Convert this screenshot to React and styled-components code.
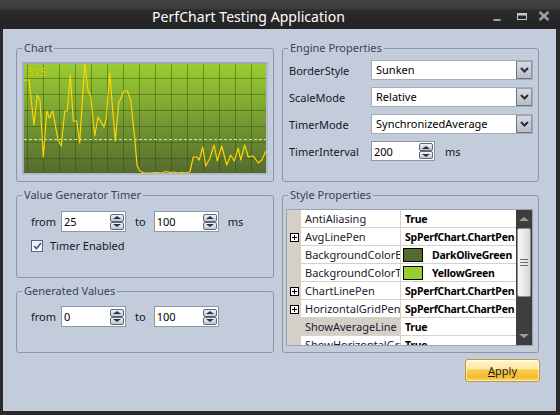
// PerfChart testing window
import React from 'react';
import styled, { createGlobalStyle } from 'styled-components';

const GlobalStyle = createGlobalStyle`
  html, body {
    margin: 0;
    padding: 0;
    background: #262626;
  }
  body {
    font-family: "Noto Sans", "Open Sans", sans-serif;
  }
`;

const Window = styled.div`
  width: 560px;
  height: 415px;
  display: flex;
  flex-direction: column;
  background: #2a2a2a;
  box-sizing: border-box;
`;

const TitleBar = styled.div`
  height: 29px;
  flex: 0 0 29px;
  display: flex;
  align-items: center;
  padding-top: 3px;
  box-sizing: border-box;
  background: linear-gradient(#444 0px, #3a3a3a 9px, #2b2b2b 10px, #232323 29px);
`;

const Title = styled.div`
  flex: 1;
  padding-left: 152px;
  color: #fff;
  font-size: 14px;
  letter-spacing: 0.05px;
`;

const Controls = styled.div`
  display: flex;
  align-items: center;
  padding-right: 9px;
`;

const ControlIcon = styled.svg`
  width: 14px;
  height: 14px;
  margin-left: ${(p) => p.$gap}px;
`;

const Client = styled.div`
  flex: 1;
  margin: 0 4px 4px 3px;
  background: #c3ccda;
  padding: 19px 0 0 13px;
  display: grid;
  grid-template-columns: 258px 257px;
  column-gap: 8px;
  align-items: start;
`;

const Column = styled.div`
  display: flex;
  flex-direction: column;
  gap: 13px;
`;

const Group = styled.section`
  position: relative;
  box-sizing: border-box;
  height: ${(p) => p.$h}px;
  border: 1px solid #8b95a7;
  border-radius: 3px;
  padding: ${(p) => p.$pad};
`;

const GroupTitle = styled.span`
  position: absolute;
  top: -8px;
  left: 5px;
  padding: 0 2px;
  background: #c3ccda;
  font-size: 11px;
  line-height: 14px;
  color: #39435a;
`;

const ChartBox = styled.div`
  height: 113px;
  box-sizing: border-box;
  border: 2px solid #b1bac8;
  border-top-color: #9ea8b7;
  border-left-color: #a5aebd;
  background: linear-gradient(#9acd32, #556b2f);
  line-height: 0;
`;

const FormGrid = styled.div`
  display: grid;
  grid-template-columns: 82px 1fr;
  grid-auto-rows: 20px;
  row-gap: 7px;
  align-items: center;
`;

const Label = styled.span`
  font-size: 11px;
  color: #171726;
  margin-right: ${(p) => p.$mr || 0}px;
  margin-left: ${(p) => p.$ml || 0}px;
`;

const Combo = styled.div`
  display: flex;
  height: 20px;
  box-sizing: border-box;
  border: 1px solid #a4acba;
  background: #fff;
`;

const ComboText = styled.span`
  flex: 1;
  padding-left: 4px;
  font-size: 11px;
  line-height: 18px;
  color: #000;
`;

const ComboButton = styled.span`
  width: 16px;
  display: flex;
  align-items: center;
  justify-content: center;
  box-sizing: border-box;
  border: 1px solid #6a7282;
  border-right-color: #8a92a0;
  border-top-color: #9aa2b0;
  background: linear-gradient(#d7dae0, #b8bdc7);
`;

const Inline = styled.div`
  display: flex;
  align-items: center;
`;

const SpinBox = styled.div`
  display: flex;
  align-items: center;
  width: ${(p) => p.$w}px;
  height: ${(p) => p.$h}px;
  box-sizing: border-box;
  border: 1px solid #8d97a9;
  background: #fff;
  padding: 0 1px 0 1px;
`;

const SpinText = styled.span`
  flex: 1;
  font-size: 11px;
  color: #000;
  padding-left: 1px;
`;

const SpinButtons = styled.div`
  display: flex;
  flex-direction: column;
  width: 14px;
`;

const SpinButton = styled.div`
  height: 8px;
  box-sizing: border-box;
  border: 1px solid #5f6878;
  border-radius: 2px;
  background: linear-gradient(#f1f3f6, #c1c6cf);
  display: flex;
  align-items: center;
  justify-content: center;

  &::after {
    content: '';
    border-left: 4px solid transparent;
    border-right: 4px solid transparent;
    ${(p) =>
      p.$down ? 'border-top: 3px solid #2b3343;' : 'border-bottom: 3px solid #2b3343;'}
  }
`;

const CheckRow = styled.div`
  display: flex;
  align-items: center;
  margin-top: 6px;
`;

const CheckBox = styled.span`
  width: 12px;
  height: 12px;
  box-sizing: border-box;
  border: 1px solid #566479;
  background: linear-gradient(#eef1f5, #ffffff);
  display: flex;
  align-items: center;
  justify-content: center;
  margin-right: 7px;
`;

const PropGrid = styled.div`
  display: flex;
  height: 137px;
  box-sizing: border-box;
  border: 1px solid #9aa2ae;
  background: #fff;
`;

const PropRows = styled.div`
  flex: 1;
  overflow: hidden;
`;

const PropRow = styled.div`
  display: grid;
  grid-template-columns: 14px 100px 1fr;
  height: 18px;
`;

const RowMargin = styled.div`
  background: #d4d0c8;
  display: flex;
  align-items: center;
  justify-content: center;
`;

const NameCell = styled.div`
  background: ${(p) => (p.$sel ? '#d4d0c8' : '#fff')};
  border-right: 1px solid #d6d2ca;
  border-bottom: 1px solid #d6d2ca;
  padding-left: 4px;
  font-size: 11px;
  line-height: 17px;
  color: #23182c;
  white-space: nowrap;
  overflow: hidden;
`;

const ValueCell = styled.div`
  display: flex;
  align-items: center;
  border-bottom: 1px solid #d6d2ca;
  padding-left: ${(p) => (p.$swatch ? 2 : 4)}px;
  font-size: 10.5px;
  letter-spacing: -0.25px;
  font-weight: bold;
  color: #000;
  white-space: nowrap;
  overflow: hidden;
`;

const Swatch = styled.span`
  flex: 0 0 20px;
  height: 14px;
  box-sizing: border-box;
  border: 1px solid #000;
  background: ${(p) => p.$color};
  margin-right: 9px;
`;

const ScrollBar = styled.div`
  width: 16px;
  background: #3d3d3d;
  display: flex;
  flex-direction: column;
`;

const ScrollArrow = styled.div`
  height: 18px;
  display: flex;
  align-items: center;
  justify-content: center;

  &::after {
    content: '';
    border-left: 5px solid transparent;
    border-right: 5px solid transparent;
    ${(p) =>
      p.$down ? 'border-top: 4px solid #9c9c9c;' : 'border-bottom: 4px solid #9c9c9c;'}
  }
`;

const Thumb = styled.div`
  height: 69px;
  margin: 0 1px 0 1px;
  box-sizing: border-box;
  border: 1px solid #8e8e8e;
  border-radius: 2px;
  background: linear-gradient(90deg, #f6f6f6, #e6e6e6 60%, #d4d4d4);
  display: flex;
  flex-direction: column;
  align-items: center;
  justify-content: center;
  gap: 2px;
`;

const Grip = styled.span`
  width: 8px;
  height: 1px;
  background: #6c6c6c;
`;

const Spacer = styled.div`
  flex: 1;
`;

const ButtonRow = styled.div`
  display: flex;
  justify-content: flex-end;
  margin-top: 6px;
  margin-right: -1px;
`;

const ApplyButton = styled.button`
  width: 75px;
  height: 23px;
  padding: 0;
  border: 1px solid #c29a3a;
  border-radius: 3px;
  background: linear-gradient(#fff6d2 0%, #fde9a2 40%, #f7cb4e 50%, #f2bb2c 80%, #f8d67a 100%);
  box-shadow: inset 0 0 0 1px rgba(255, 255, 255, 0.55);
  font-family: inherit;
  font-size: 11px;
  color: #1c1c1c;

  u {
    text-decoration: underline;
  }
`;

const Expander = () => (
  <svg width="9" height="9" viewBox="0 0 9 9">
    <rect x="0.5" y="0.5" width="8" height="8" fill="#fff" stroke="#000" />
    <path d="M2 4.5h5M4.5 2v5" stroke="#000" />
  </svg>
);

const points = [
  [24, 80], [29, 80], [34, 125], [37.3, 95], [40, 100], [43.3, 157], [46.7, 111], [49.3, 118],
  [52.7, 110.7], [58, 140], [61.3, 146], [64.7, 111], [67.3, 111], [70.3, 75], [73.3, 121],
  [76.7, 121], [79.7, 143], [84.7, 63], [88, 91], [90.7, 96], [94.7, 136], [98, 117], [104, 127],
  [106.3, 118], [109.7, 73], [115.3, 141], [118.7, 103], [124, 91], [127.3, 91], [130.7, 100],
  [134.7, 138], [137, 165], [139.7, 171], [144, 173], [150, 173], [156, 172.5], [162, 173],
  [166, 171.5], [170, 172.5], [174, 172], [178, 173], [182, 172.5], [186, 173], [190, 171.5],
  [193.3, 157], [196.7, 157], [199.3, 160], [202.7, 147], [205.7, 166], [210, 158], [214, 145],
  [217.3, 161], [221.7, 146], [226.7, 165], [230.7, 155], [234.3, 161], [238.3, 148],
  [240.7, 160], [244.7, 145], [248.3, 157], [253.3, 156], [258.3, 163], [261.7, 160],
  [266, 151],
];

const Chart = () => {
  const vLines = Array.from({ length: 15 }, (_, i) => 27.5 + i * 16);
  const hLines = Array.from({ length: 6 }, (_, i) => 78.5 + i * 16);
  const d = points.map(([x, y], i) => `${i ? 'L' : 'M'}${x} ${y}`).join(' ');
  return (
    <svg width="242" height="109" viewBox="24 64 242 109">
      {vLines.map((x) => (
        <line key={`v${x}`} x1={x} y1="64" x2={x} y2="173" stroke="rgba(40,60,10,0.38)" />
      ))}
      {hLines.map((y) => (
        <line key={`h${y}`} x1="24" y1={y} x2="266" y2={y} stroke="rgba(40,60,10,0.38)" />
      ))}
      <line x1="24" y1="139.5" x2="266" y2="139.5" stroke="#b8f0a6" strokeDasharray="3 2" />
      <path d={d} fill="none" stroke="#ffd500" strokeWidth="1.2" strokeLinejoin="round" />
      <text x="27" y="76" fill="#e6c400" fontSize="11" fontFamily="Noto Sans, sans-serif">
        325
      </text>
    </svg>
  );
};

const Chevron = () => (
  <svg width="9" height="6" viewBox="0 0 9 6">
    <path d="M1 1l3.5 3.5L8 1" fill="none" stroke="#262c3a" strokeWidth="2" />
  </svg>
);

const Spin = ({ value, w = 65, h = 21 }) => (
  <SpinBox $w={w} $h={h}>
    <SpinText>{value}</SpinText>
    <SpinButtons>
      <SpinButton />
      <SpinButton $down />
    </SpinButtons>
  </SpinBox>
);

const ComboBox = ({ value }) => (
  <Combo>
    <ComboText>{value}</ComboText>
    <ComboButton>
      <Chevron />
    </ComboButton>
  </Combo>
);

const props = [
  { name: 'AntiAliasing', value: 'True' },
  { name: 'AvgLinePen', value: 'SpPerfChart.ChartPen', expand: true },
  { name: 'BackgroundColorBottom', value: 'DarkOliveGreen', color: '#556b2f' },
  { name: 'BackgroundColorTop', value: 'YellowGreen', color: '#9acd32' },
  { name: 'ChartLinePen', value: 'SpPerfChart.ChartPen', expand: true },
  { name: 'HorizontalGridPen', value: 'SpPerfChart.ChartPen', expand: true },
  { name: 'ShowAverageLine', value: 'True', sel: true },
  { name: 'ShowHorizontalGridLines', value: 'True' },
];

const App = () => {
  return (
    <Window>
      <GlobalStyle />
      <TitleBar>
        <Title>PerfChart Testing Application</Title>
        <Controls>
          <ControlIcon $gap={0} viewBox="0 0 14 14">
            <rect x="3.5" y="10" width="7" height="2" fill="#9aa3ad" />
          </ControlIcon>
          <ControlIcon $gap={11} viewBox="0 0 14 14">
            <rect x="2.5" y="4.5" width="9" height="6" fill="none" stroke="#c4c9d0" />
            <rect x="2" y="4" width="10" height="2.5" fill="#c4c9d0" />
          </ControlIcon>
          <ControlIcon $gap={8} viewBox="0 0 14 14">
            <path d="M2.5 3l9 8M11.5 3l-9 8" stroke="#9aa3ad" strokeWidth="2.4" />
          </ControlIcon>
        </Controls>
      </TitleBar>

      <Client>
        <Column>
          <Group $h={134} $pad="13px 5px 0 5px">
            <GroupTitle>Chart</GroupTitle>
            <ChartBox>
              <Chart />
            </ChartBox>
          </Group>

          <Group $h={83} $pad="15px 0 0 14px">
            <GroupTitle>Value Generator Timer</GroupTitle>
            <Inline>
              <Label $mr={5}>from</Label>
              <Spin value="25" />
              <Label $ml={9} $mr={8}>to</Label>
              <Spin value="100" />
              <Label $ml={9}>ms</Label>
            </Inline>
            <CheckRow>
              <CheckBox>
                <svg width="9" height="8" viewBox="0 0 9 8">
                  <path d="M1 4l2.4 2.6L8 1" fill="none" stroke="#3f63a8" strokeWidth="1.8" />
                </svg>
              </CheckBox>
              <Label>Timer Enabled</Label>
            </CheckRow>
          </Group>

          <Group $h={62} $pad="14px 0 0 14px">
            <GroupTitle>Generated Values</GroupTitle>
            <Inline>
              <Label $mr={5}>from</Label>
              <Spin value="0" />
              <Label $ml={9} $mr={8}>to</Label>
              <Spin value="100" />
            </Inline>
          </Group>
        </Column>

        <Column>
          <Group $h={134} $pad="11px 5px 0 6px">
            <GroupTitle>Engine Properties</GroupTitle>
            <FormGrid>
              <Label>BorderStyle</Label>
              <ComboBox value="Sunken" />
              <Label>ScaleMode</Label>
              <ComboBox value="Relative" />
              <Label>TimerMode</Label>
              <ComboBox value="SynchronizedAverage" />
              <Label>TimerInterval</Label>
              <Inline>
                <Spin value="200" w={64} h={20} />
                <Label $ml={10}>ms</Label>
              </Inline>
            </FormGrid>
          </Group>

          <div>
            <Group $h={158} $pad="13px 5px 0 3px">
              <GroupTitle>Style Properties</GroupTitle>
              <PropGrid>
                <PropRows>
                  {props.map((p) => (
                    <PropRow key={p.name}>
                      <RowMargin>{p.expand && <Expander />}</RowMargin>
                      <NameCell $sel={p.sel}>{p.name}</NameCell>
                      <ValueCell $swatch={!!p.color}>
                        {p.color && <Swatch $color={p.color} />}
                        {p.value}
                      </ValueCell>
                    </PropRow>
                  ))}
                </PropRows>
                <ScrollBar>
                  <ScrollArrow />
                  <Thumb>
                    <Grip />
                    <Grip />
                    <Grip />
                  </Thumb>
                  <Spacer />
                  <ScrollArrow $down />
                </ScrollBar>
              </PropGrid>
            </Group>
            <ButtonRow>
              <ApplyButton>
                <u>A</u>pply
              </ApplyButton>
            </ButtonRow>
          </div>
        </Column>
      </Client>
    </Window>
  );
};

export default App;
